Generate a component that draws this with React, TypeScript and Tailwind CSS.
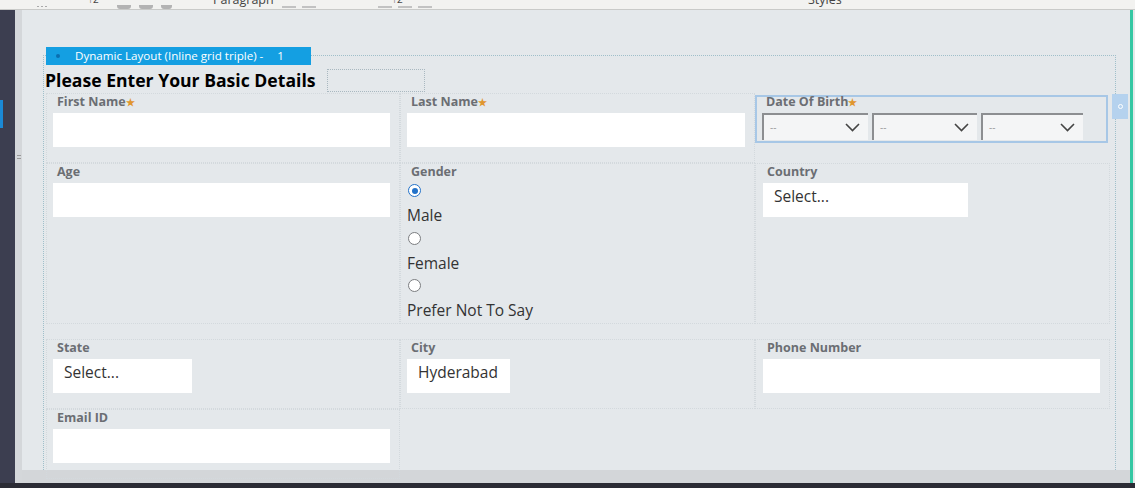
import React from 'react';

const font = { fontFamily: '"Open Sans", "Noto Sans", Arial, sans-serif' };

const Label: React.FC<{ text: string; required?: boolean }> = ({ text, required }) => (
  <div className="h-[16px] pl-[4px] text-[12.5px] font-bold leading-[16px] text-[#6b6e73]">
    {text}
    {required && <span className="text-[10px] text-[#e0962f]">★</span>}
  </div>
);

const TextBox: React.FC<{ className?: string; value?: string }> = ({ className = '', value }) => (
  <div className={`mt-[3px] h-[34px] bg-white px-[11px] pt-[1px] text-[15.5px] leading-[24px] text-[#333] ${className}`}>
    {value}
  </div>
);

const Chevron = () => (
  <svg width="15" height="9" viewBox="0 0 15 9" fill="none">
    <path d="M1 1l6.5 6.5L14 1" stroke="#444" strokeWidth="1.6" />
  </svg>
);

const DateSelect: React.FC<{ w: string }> = ({ w }) => (
  <div className={`${w} flex h-[27px] items-center justify-between border-l-2 border-t-2 border-[#8c8e91] bg-[#f4f5f6] pl-[6px] pr-[8px]`}>
    <span className="text-[10px] text-[#9a9c9f]">--</span>
    <Chevron />
  </div>
);

const Radio: React.FC<{ checked?: boolean }> = ({ checked }) => (
  <div className="flex h-[22px] items-start pl-[1px] pt-[1px]">
    {checked ? (
      <div className="flex h-[13px] w-[13px] items-center justify-center rounded-full border-[1.5px] border-[#2372c9] bg-white">
        <div className="h-[6px] w-[6px] rounded-full bg-[#2372c9]" />
      </div>
    ) : (
      <div className="h-[13px] w-[13px] rounded-full border border-[#7b7d80] bg-white" />
    )}
  </div>
);

const cell = 'pl-[7px] pr-[10px] pt-[1px] outline-1 -outline-offset-1 outline-dotted outline-[#d3d9dd]';

export default function App() {
  return (
    <div className="flex h-[488px] w-[1135px] flex-col overflow-hidden bg-[#e4e8eb]" style={font}>
      {/* toolbar remnant */}
      <div className="relative h-[10px] shrink-0 overflow-hidden border-b border-[#c9cac8] bg-[#f2f2f0] text-[12.5px] text-[#444]">
        <span className="absolute left-[213px] top-[-9px]">Paragraph</span>
        <span className="absolute left-[808px] top-[-9px]">Styles</span>
        <span className="absolute left-[88px] top-[-8px] text-[10px]">↑2</span>
        <span className="absolute left-[392px] top-[-8px] text-[10px]">↑2</span>
        <div className="absolute left-[37px] top-[6px] flex gap-[2px]">
          <i className="h-[1px] w-[2px] bg-[#aaa]" /><i className="h-[1px] w-[2px] bg-[#aaa]" /><i className="h-[1px] w-[2px] bg-[#aaa]" />
        </div>
        <div className="absolute left-[117px] top-[5px] flex gap-[8px]">
          <i className="h-[4px] w-[14px] rounded-b-[3px] bg-[#b3b3b3]" />
          <i className="h-[4px] w-[14px] rounded-b-[3px] bg-[#b3b3b3]" />
          <i className="h-[4px] w-[11px] rounded-b-[3px] bg-[#b3b3b3]" />
        </div>
        <div className="absolute left-[282px] top-[6px] flex gap-[6px]">
          <i className="h-[2px] w-[14px] bg-[#c2c2c2]" /><i className="h-[2px] w-[14px] bg-[#c2c2c2]" />
        </div>
        <div className="absolute left-[378px] top-[6px] flex gap-[6px]">
          <i className="h-[2px] w-[14px] bg-[#c2c2c2]" /><i className="h-[2px] w-[14px] bg-[#c2c2c2]" /><i className="h-[2px] w-[14px] bg-[#c2c2c2]" />
        </div>
      </div>

      <div className="flex min-h-0 flex-1">
        {/* dark side rail */}
        <div className="relative w-[15px] shrink-0 bg-[#3c3e50]">
          <div className="absolute left-0 top-[90px] h-[28px] w-[3px] bg-[#1b8ad6]" />
        </div>
        <div className="flex w-[7px] shrink-0 flex-col items-center bg-[#d4d7da] pt-[145px]">
          <div className="h-[1px] w-[4px] bg-[#999]" />
          <div className="mt-[2px] h-[1px] w-[4px] bg-[#999]" />
        </div>

        {/* canvas */}
        <div className="flex min-w-0 flex-1 flex-col">
          <div className="min-h-0 flex-1 pt-[45px]">
            <div className="relative ml-[21px] h-full w-[1073px] border-l border-r border-t border-dotted border-[#9fbfca]">
              {/* tag */}
              <div className="absolute left-[2px] top-[-9px] flex h-[18px] w-[265px] items-center bg-[#149fe2] text-[11.6px] text-white">
                <div className="ml-[10px] h-[4px] w-[4px] rounded-full bg-[#0a6fb0]" />
                <span className="ml-[15px]">Dynamic Layout (Inline grid triple) -</span>
                <span className="ml-[14px]">1</span>
              </div>
              {/* side handle */}
              <div className="absolute left-[1068px] top-[38px] flex h-[25px] w-[16px] items-center justify-center bg-[#b5d2ee]">
                <div className="h-[5px] w-[5px] rounded-full border border-white" />
              </div>

              <div className="mt-[13px] flex h-[22px] items-center">
                <h1 className="pl-[1px] text-[17.6px] font-bold leading-[22px] text-black">Please Enter Your Basic Details</h1>
                <div className="ml-[11px] h-[23px] w-[98px] border border-dotted border-[#a9b8c0]" />
              </div>

              <div className="ml-[2px] mt-[2px] w-[1064px]">
                {/* row 1 */}
                <div className="grid grid-cols-[354px_355px_355px]">
                  <div className={`${cell} pb-[16px]`}>
                    <Label text="First Name" required />
                    <TextBox />
                  </div>
                  <div className={`${cell} pb-[16px]`}>
                    <Label text="Last Name" required />
                    <TextBox />
                  </div>
                  <div className="pt-[1px]">
                    <div className="mt-[1px] h-[48px] w-[353px] border-2 border-[#a7c7e6] pl-[5px]">
                      <div className="-mt-[3px]">
                        <Label text="Date Of Birth" required />
                      </div>
                      <div className="mt-[3px] flex gap-[4px]">
                        <DateSelect w="w-[106px]" />
                        <DateSelect w="w-[105px]" />
                        <DateSelect w="w-[102px]" />
                      </div>
                    </div>
                  </div>
                </div>

                {/* row 2 */}
                <div className="mb-[15px] grid grid-cols-[354px_355px_355px]">
                  <div className={cell}>
                    <Label text="Age" />
                    <TextBox />
                  </div>
                  <div className={`${cell} pb-[4px]`}>
                    <Label text="Gender" />
                    <div className="mt-[3px] text-[15.5px] leading-[20px] text-[#333]">
                      <Radio checked />
                      <div className="h-[20px]">Male</div>
                      <div className="mt-[5.5px]">
                        <Radio />
                      </div>
                      <div className="h-[20px]">Female</div>
                      <div className="mt-[5.5px]">
                        <Radio />
                      </div>
                      <div className="h-[20px]">Prefer Not To Say</div>
                    </div>
                  </div>
                  <div className={`${cell} pl-[8px]`}>
                    <Label text="Country" />
                    <TextBox className="w-[205px]" value="Select..." />
                  </div>
                </div>

                {/* row 3 */}
                <div className="grid grid-cols-[354px_355px_355px]">
                  <div className={`${cell} pb-[16px]`}>
                    <Label text="State" />
                    <TextBox className="w-[139px]" value="Select..." />
                  </div>
                  <div className={`${cell} pb-[16px]`}>
                    <Label text="City" />
                    <TextBox className="w-[103px]" value="Hyderabad" />
                  </div>
                  <div className={`${cell} pb-[16px] pl-[8px]`}>
                    <Label text="Phone Number" />
                    <TextBox />
                  </div>
                </div>

                {/* row 4 */}
                <div className="grid grid-cols-[354px_355px_355px]">
                  <div className={`${cell} pb-[16px]`}>
                    <Label text="Email ID" />
                    <TextBox />
                  </div>
                  <div />
                  <div />
                </div>
              </div>
            </div>
          </div>
          <div className="h-[13px] shrink-0 bg-[#d3d6d9]" />
        </div>

        <div className="w-[3px] shrink-0 bg-[#34c7a3]" />
        <div className="w-[2px] shrink-0 bg-[#e6e8e9]" />
      </div>
      <div className="h-[5px] shrink-0 bg-[#2b2c35]" />
    </div>
  );
}
